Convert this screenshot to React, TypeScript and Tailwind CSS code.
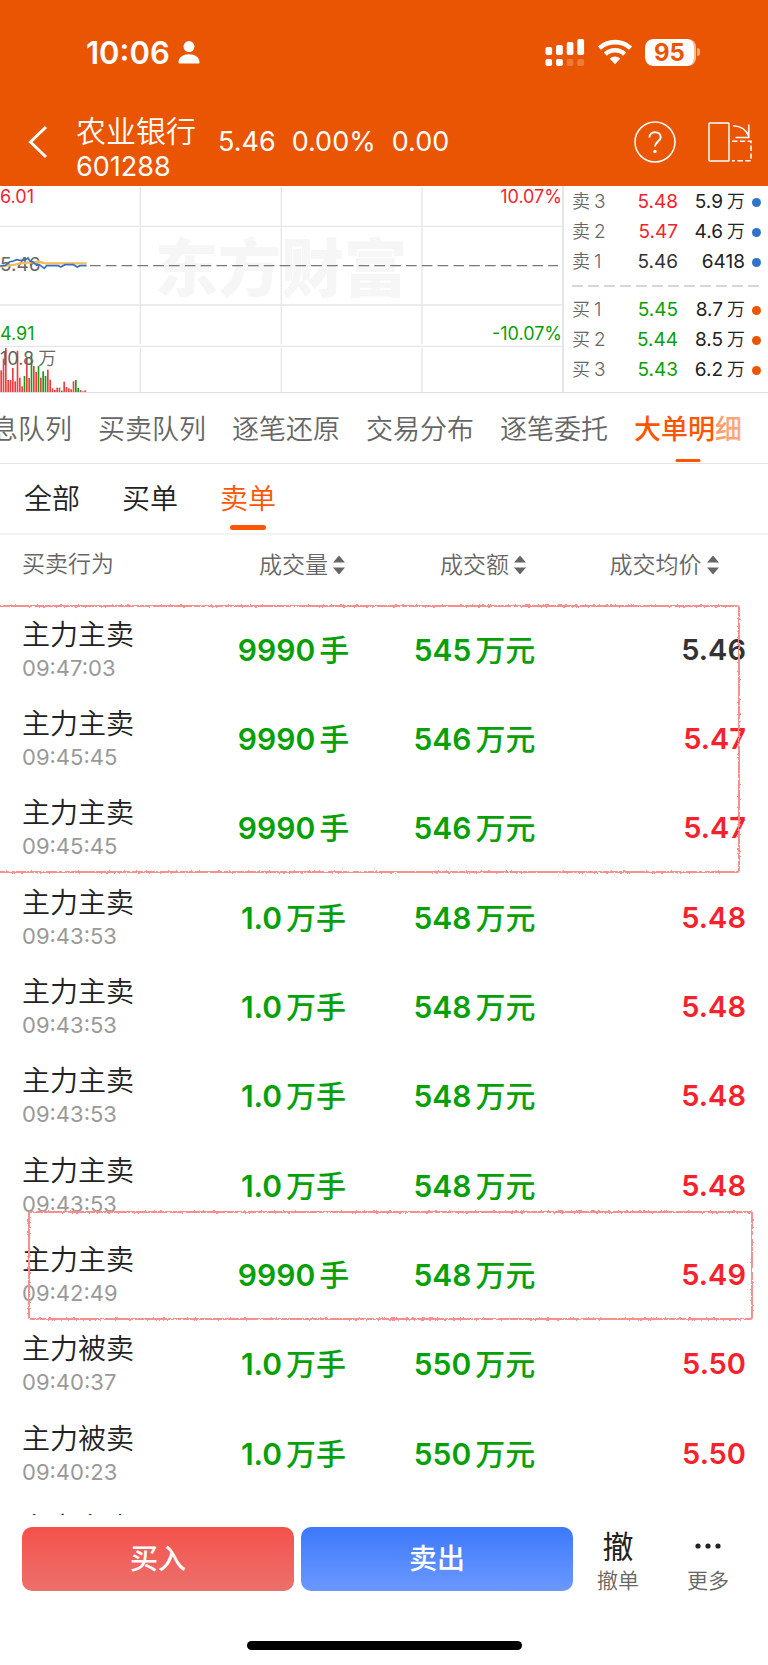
import { useState } from 'react'
import clsx from 'clsx'

const tabs = ['息队列', '买卖队列', '逐笔还原', '交易分布', '逐笔委托', '大单明细']
const filters = ['全部', '买单', '卖单']

type Quote = { label: string; no: number; price: string; vol: string; unit?: string; tone: string }

const sells: Quote[] = [
  { label: '卖', no: 3, price: '5.48', vol: '5.9', unit: '万', tone: 'text-[#f5222d]' },
  { label: '卖', no: 2, price: '5.47', vol: '4.6', unit: '万', tone: 'text-[#f5222d]' },
  { label: '卖', no: 1, price: '5.46', vol: '6418', tone: 'text-[#333333]' },
]

const buys: Quote[] = [
  { label: '买', no: 1, price: '5.45', vol: '8.7', unit: '万', tone: 'text-[#08a008]' },
  { label: '买', no: 2, price: '5.44', vol: '8.5', unit: '万', tone: 'text-[#08a008]' },
  { label: '买', no: 3, price: '5.43', vol: '6.2', unit: '万', tone: 'text-[#08a008]' },
]

type Order = { side: string; time: string; vol: string; volUnit: string; amount: string; price: string; flat?: boolean }

const orders: Order[] = [
  { side: '主力主卖', time: '09:47:03', vol: '9990', volUnit: '手', amount: '545', price: '5.46', flat: true },
  { side: '主力主卖', time: '09:45:45', vol: '9990', volUnit: '手', amount: '546', price: '5.47' },
  { side: '主力主卖', time: '09:45:45', vol: '9990', volUnit: '手', amount: '546', price: '5.47' },
  { side: '主力主卖', time: '09:43:53', vol: '1.0', volUnit: '万手', amount: '548', price: '5.48' },
  { side: '主力主卖', time: '09:43:53', vol: '1.0', volUnit: '万手', amount: '548', price: '5.48' },
  { side: '主力主卖', time: '09:43:53', vol: '1.0', volUnit: '万手', amount: '548', price: '5.48' },
  { side: '主力主卖', time: '09:43:53', vol: '1.0', volUnit: '万手', amount: '548', price: '5.48' },
  { side: '主力主卖', time: '09:42:49', vol: '9990', volUnit: '手', amount: '548', price: '5.49' },
  { side: '主力被卖', time: '09:40:37', vol: '1.0', volUnit: '万手', amount: '550', price: '5.50' },
  { side: '主力被卖', time: '09:40:23', vol: '1.0', volUnit: '万手', amount: '550', price: '5.50' },
]

// volume bars: height, and 1 when the minute closed down
const bars: [number, number][] = [
  [65, 0], [100, 0], [132, 0], [36, 0], [36, 0], [72, 0], [32, 0], [124, 0], [43, 0], [17, 0], [48, 1], [104, 0],
  [42, 0], [110, 1], [78, 0], [60, 0], [78, 1], [43, 0], [62, 1], [48, 1], [67, 0], [37, 0], [11, 0], [6, 0],
  [13, 0], [13, 0], [4, 1], [31, 0], [15, 0], [11, 0], [8, 0], [32, 0], [36, 1], [12, 1], [6, 0], [2, 0], [5, 0],
]

function StatusBar() {
  return (
    <div className="flex h-[104px] items-center pl-[86px] pr-[68px]">
      <span className="text-[31px] font-semibold leading-none">10:06</span>
      <svg className="ml-2 h-[23px] w-[22px]" viewBox="0 0 22 23" fill="currentColor">
        <circle cx="11" cy="5.6" r="5.5" />
        <path d="M0.5 21C0.5 16.5 5 13.2 11 13.2S21.5 16.5 21.5 21C21.5 22.2 21 22.6 20 22.6H2C1 22.6 0.5 22.2 0.5 21Z" />
      </svg>
      <div className="ml-auto flex items-center">
        <svg className="h-7 w-10" viewBox="0 0 40 28" fill="currentColor">
          <rect x="0.5" y="9" width="6.6" height="8" rx="1.8" />
          <rect x="11" y="7" width="6.8" height="10" rx="1.8" />
          <rect x="21.8" y="4" width="6.6" height="13" rx="1.8" />
          <rect x="32.3" y="1" width="6.8" height="16" rx="1.8" />
          <rect x="0.5" y="21" width="6.6" height="7" rx="1.8" />
          <rect x="11" y="21" width="6.8" height="7" rx="1.8" />
          <rect x="21.8" y="21" width="6.6" height="7" rx="1.8" opacity="0.22" />
          <rect x="32.3" y="21" width="6.8" height="7" rx="1.8" opacity="0.22" />
        </svg>
        <svg className="ml-3 h-[26px] w-9" viewBox="0 0 36 26" fill="none" stroke="currentColor">
          <path d="M2.4 9.1C11 1.1 25 1.1 33.6 9.1" strokeWidth="4.6" />
          <path d="M8.3 15.2C13.8 10 22.2 10 27.7 15.2" strokeWidth="4.6" />
          <path d="M12.6 19.6C15.7 16.8 20.3 16.8 23.4 19.6L18 25.3Z" fill="currentColor" stroke="none" />
        </svg>
        <div className="ml-3 flex h-[27px] w-[51px] items-center justify-center rounded-lg border-r-2 border-white/60 bg-white bg-clip-padding pt-0.5 text-2xl font-bold leading-none text-[#ea5504]">
          95
        </div>
        <span className="ml-px h-2 w-[3px] rounded-r-full bg-white/50" />
      </div>
    </div>
  )
}

function Header() {
  return (
    <header className="bg-[#ea5504] text-white">
      <StatusBar />
      <div className="flex h-[82px] items-center pb-[7px] pl-7 pr-4">
        <button aria-label="返回">
          <svg className="h-[34px] w-5" viewBox="0 0 20 34" fill="none" stroke="currentColor" strokeWidth="3">
            <path d="M18 2L2.5 17L18 32" />
          </svg>
        </button>
        <div className="ml-7 pt-[14px]">
          <div className="text-[30px] font-[350] leading-9">农业银行</div>
          <div className="text-[27px] leading-9">601288</div>
        </div>
        <div className="ml-[22px] flex gap-4 text-[27px] leading-9">
          <span>5.46</span>
          <span>0.00%</span>
          <span>0.00</span>
        </div>
        <button className="ml-auto" aria-label="帮助">
          <svg className="size-[42px]" viewBox="0 0 42 42" fill="none" stroke="currentColor" strokeWidth="1.5">
            <circle cx="21" cy="21" r="20" />
            <path d="M15.4 16.6C15.4 13.2 17.8 11.2 21 11.2S26.7 13.3 26.7 16.2C26.7 20.3 21 20.6 21 25.6" strokeWidth="2" />
            <circle cx="21" cy="30.4" r="1.7" fill="currentColor" stroke="none" />
          </svg>
        </button>
        <button className="ml-8" aria-label="横屏">
          <svg className="h-10 w-11" viewBox="0 0 44 40" fill="none" stroke="currentColor" strokeWidth="1.5">
            <rect x="1" y="1" width="20" height="38" rx="0.8" />
            <path d="M25 3.8C33 4.2 38.5 8 40.8 14.5M40.8 2.5V15.6H27.5" />
            <path d="M24 19.2H43V38.8H24" strokeDasharray="5.4 2.4" />
          </svg>
        </button>
      </div>
    </header>
  )
}

function Chart() {
  return (
    <div className="relative h-[206px] flex-1 overflow-hidden text-[18px] leading-5">
      <div className="absolute inset-x-0 top-[47px] text-center text-[63px] font-black leading-[70px] text-[#f6f6f6]">
        东方财富
      </div>
      <svg className="absolute inset-0 h-full w-full" viewBox="0 0 1686 618" preserveAspectRatio="none" fill="none">
        <path
          d="M0 121H1686M0 357H1686M0 481H1686M421 3V474M421 486V618M844 3V474M844 486V618M1266 3V474M1266 486V618"
          stroke="#e6e6ea"
          strokeWidth="4"
        />
        <path d="M270 239H1674" stroke="#777777" strokeWidth="4" strokeDasharray="32 15.4" />
        {bars.map(([h, down], i) => (
          <rect key={i} x={1 + i * 7} y={618 - h} width="5" height={h} fill={down ? '#12a012' : '#f03c41'} />
        ))}
      </svg>
      <span className="absolute left-0 top-px text-[#f5222d]">6.01</span>
      <span className="absolute right-0 top-px text-[#f5222d]">10.07%</span>
      <span className="absolute left-0 top-[69px] text-[19px] text-[#666666]">5.46</span>
      <span className="absolute bottom-[48px] left-0 text-[#08a008]">4.91</span>
      <span className="absolute bottom-[48px] right-0 text-[#08a008]">-10.07%</span>
      <span className="absolute bottom-[23px] left-0 text-[#666666]">
        10.8<span className="ml-1 font-[350]">万</span>
      </span>
      <svg className="absolute inset-0 h-full w-full" viewBox="0 0 1686 618" preserveAspectRatio="none" fill="none">
        <path d="M0 241L45 236L60 232L90 229L120 228L135 232H260" stroke="#f9bc50" strokeWidth="7" />
        <path
          d="M0 240L16 238L28 228L40 225L50 221L60 223L76 222L84 216L90 225L100 229L110 238L118 236L133 247L140 239H175L182 243L195 236H220L232 243L240 239H260"
          stroke="#3273c8"
          strokeWidth="5"
        />
      </svg>
    </div>
  )
}

function QuoteRows({ rows, dot }: { rows: Quote[]; dot: string }) {
  return (
    <tbody>
      {rows.map((q) => (
        <tr key={q.no} className="h-[30px]">
          <td className="w-9 p-0 text-lg font-[350] leading-[30px] text-[#666666]">
            {q.label}
            <span className="ml-1 text-[19px]">{q.no}</span>
          </td>
          <td className={clsx('p-0 text-right', q.tone)}>{q.price}</td>
          <td className="w-[67px] p-0 text-right text-[#222222]">
            {q.vol}
            {q.unit && <span className="ml-1 text-lg font-[350] leading-none">{q.unit}</span>}
          </td>
          <td className="w-4 p-0">
            <div className={clsx('ml-auto size-[9px] rounded-full', dot)} />
          </td>
        </tr>
      ))}
    </tbody>
  )
}

function OrderBook() {
  return (
    <div className="w-[206px] border-l-2 border-[#e6e6ea] pl-2 pr-[7px] pt-px">
      <table className="w-full table-fixed text-[19px] leading-[30px]">
        <QuoteRows rows={sells} dot="bg-[#2f74c8]" />
        <tbody>
          <tr className="h-[18px]">
            <td colSpan={4} className="p-0">
              <svg className="block h-[2px] w-full">
                <path d="M0 1H600" stroke="#d5d6dc" strokeWidth="2" strokeDasharray="11 5" />
              </svg>
            </td>
          </tr>
        </tbody>
        <QuoteRows rows={buys} dot="bg-[#ea5504]" />
      </table>
    </div>
  )
}

function SortHead({ label }: { label: string }) {
  return (
    <th scope="col" className="sticky top-0 bg-white p-0 font-[350]">
      <button className="inline-flex items-center pl-[17px] align-middle">
        {label}
        <svg className="ml-[5px] h-5 w-3" viewBox="0 0 12 20" fill="#666666">
          <path d="M6 0.5L12 7.5H0ZM6 19.5L12 12.5H0Z" />
        </svg>
      </button>
    </th>
  )
}

// hand-drawn red frame over a group of rows
function Marker({ className }: { className: string }) {
  return (
    <svg className={clsx('pointer-events-none absolute overflow-visible', className)} fill="none">
      <filter id="rough" x="-5%" y="-10%" width="110%" height="120%">
        <feTurbulence type="fractalNoise" baseFrequency="0.4" numOctaves="2" seed="4" />
        <feDisplacementMap in="SourceGraphic" scale="3" xChannelSelector="R" yChannelSelector="G" />
      </filter>
      <rect width="100%" height="100%" rx="2" stroke="#f78f8c" strokeWidth="2" filter="url(#rough)" />
    </svg>
  )
}

function OrderTable() {
  return (
    <main className="relative min-h-0 flex-1 overflow-x-hidden overflow-y-auto px-[22px] [scrollbar-width:none]">
      <table className="w-full table-fixed">
        <thead>
          <tr className="h-[70px] text-[23px] leading-8 text-[#666666] [&>th]:pb-3">
            <th scope="col" className="sticky top-0 bg-white p-0 text-left font-[350]">买卖行为</th>
            <SortHead label="成交量" />
            <SortHead label="成交额" />
            <SortHead label="成交均价" />
          </tr>
        </thead>
        <tbody className="text-[30px] font-semibold leading-9 text-[#08a008]">
          {[...orders, orders[1]].map((o, i) => (
            <tr key={i} className="h-[89px] nth-[3n]:h-[90px]">
              <td className="p-0">
                <div className="text-[28px] font-[350] leading-9 text-[#222222]">{o.side}</div>
                <div className="text-[22px] font-normal leading-[30px] text-[#999999]">{o.time}</div>
              </td>
              <td className="p-0 text-center">
                {o.vol}
                <span className="ml-1 font-medium">{o.volUnit}</span>
              </td>
              <td className="p-0 text-center">
                {o.amount}
                <span className="ml-1 font-medium">万元</span>
              </td>
              <td className={clsx('p-0 text-right text-[29px]', o.flat ? 'text-[#333333]' : 'text-[#f5222d]')}>{o.price}</td>
            </tr>
          ))}
        </tbody>
      </table>
      <Marker className="-left-1 top-[71px] h-[266px] w-[calc(100%-25px)]" />
      <Marker className="left-[29px] top-[677px] h-[107px] w-[calc(100%-45px)]" />
    </main>
  )
}

export default function App() {
  const [tab, setTab] = useState('大单明细')
  const [filter, setFilter] = useState('卖单')

  return (
    <div className="flex h-screen flex-col overflow-hidden bg-white font-['Inter','Noto_Sans_CJK_SC',sans-serif] text-[#222222]">
      <Header />

      <section className="flex border-b border-[#dddde2]">
        <Chart />
        <OrderBook />
      </section>

      <nav className="relative flex h-[71px] justify-end gap-[26px] overflow-hidden border-b border-[#e4e4e4] pr-[26px]">
        {tabs.map((t) => (
          <button
            key={t}
            onClick={() => setTab(t)}
            className={clsx(
              'relative shrink-0 pt-1 text-[27px]',
              t === tab ? 'font-medium text-[#ff5500]' : 'font-[350] text-[#666666]',
            )}
          >
            {t}
            {t === tab && <span className="absolute bottom-px left-1/2 h-[3px] w-[25px] -translate-x-1/2 rounded-full bg-[#ff5500]" />}
          </button>
        ))}
        <div className="pointer-events-none absolute inset-y-0 right-0 w-[54px] bg-linear-to-r from-white/40 to-white/60" />
      </nav>

      <div className="flex h-[71px] gap-[42px] border-b-2 border-[#f3f3f3] pl-6">
        {filters.map((f) => (
          <button
            key={f}
            onClick={() => setFilter(f)}
            className={clsx('relative text-[28px] font-[350]', f === filter && 'text-[#ff5500]')}
          >
            {f}
            {f === filter && <span className="absolute bottom-[3px] left-1/2 h-[5px] w-9 -translate-x-1/2 rounded-full bg-[#ff5500]" />}
          </button>
        ))}
      </div>

      <OrderTable />

      <footer className="bg-white pb-[15px] pt-3">
        <div className="flex items-start pl-[22px] pr-[15px]">
          <button className="h-16 flex-1 rounded-[10px] bg-linear-to-b from-[#f5504b] to-[#ec706b] text-[28px] font-medium text-white">
            买入
          </button>
          <button className="ml-[7px] h-16 flex-1 rounded-[10px] bg-linear-to-b from-[#3c78fb] to-[#6b98ff] text-[28px] font-medium text-white">
            卖出
          </button>
          <button className="flex w-[90px] flex-col items-center text-[21px] font-[350] leading-7 text-[#666666]">
            <span className="text-[31px] font-normal leading-10 text-[#222222]">撤</span>
            撤单
          </button>
          <button className="flex w-[90px] flex-col items-center text-[21px] font-[350] leading-7 text-[#666666]">
            <svg className="h-10 w-7" viewBox="0 0 28 40" fill="#222222">
              <circle cx="4" cy="19" r="2.6" />
              <circle cx="14" cy="19" r="2.6" />
              <circle cx="24" cy="19" r="2.6" />
            </svg>
            更多
          </button>
        </div>
        <div className="mx-auto mt-[46px] h-[9px] w-[275px] rounded-full bg-black" />
      </footer>
    </div>
  )
}
